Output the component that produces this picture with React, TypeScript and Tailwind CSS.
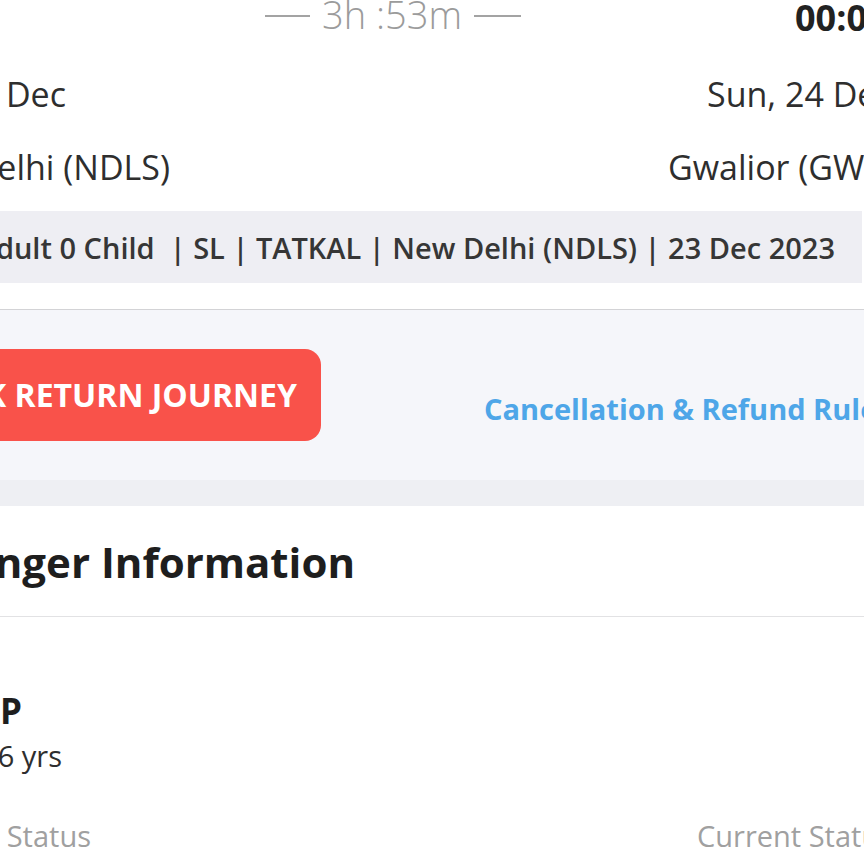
export default function App() {
  return (
    <div className="w-[864px] h-[864px] overflow-hidden bg-white text-[#2e2e2e] font-['Open_Sans',sans-serif]">
      {/* duration + arrival time */}
      <div className="flex h-[44px] items-start">
        <div className="flex shrink-0 items-center ml-[265px] -mt-[5px] gap-[12px]">
          <span className="block w-[45px] h-[2px] mt-[3px] bg-[#a3a3a3]" />
          <span className="text-[38px] leading-[38px] font-light text-[#9b9b9b] whitespace-nowrap">3h :53m</span>
          <span className="block w-[47px] h-[2px] mt-[3px] bg-[#a3a3a3]" />
        </div>
        <div className="ml-auto w-[69px] shrink-0 whitespace-nowrap text-[36px] leading-[36px] font-bold text-[#222]">
          00:00
        </div>
      </div>

      {/* dates */}
      <div className="flex mt-[33px] h-[34px]">
        <div className="w-[66px] shrink-0 flex justify-end whitespace-nowrap text-[34px] leading-[34px]">
          Sat, 23 Dec
        </div>
        <div className="ml-[641px] shrink-0 whitespace-nowrap text-[34px] leading-[34px]">
          Sun, 24 Dec
        </div>
      </div>

      {/* stations */}
      <div className="flex mt-[39px] h-[34px]">
        <div className="w-[170px] shrink-0 flex justify-end whitespace-nowrap text-[34px] leading-[34px]">
          New Delhi (NDLS)
        </div>
        <div className="ml-[498px] shrink-0 whitespace-nowrap text-[34px] leading-[34px]">
          Gwalior (GWL)
        </div>
      </div>

      {/* booking summary bar */}
      <div className="mt-[27px] w-[862px] h-[72px] bg-[#eeeef3] flex items-center justify-end pr-[27px]">
        <span className="shrink-0 whitespace-pre text-[29px] leading-[29px] font-semibold text-[#363636]">
          1 Adult 0 Child  | SL | TATKAL | New Delhi (NDLS) | 23 Dec 2023
        </span>
      </div>

      <div className="mt-[26px] h-px bg-[#d3d3d6]" />

      {/* return journey + rules */}
      <div className="h-[170px] bg-[#f5f6fa] flex items-center">
        <div className="w-[321px] shrink-0 flex justify-end">
          <button className="shrink-0 h-[92px] px-[24px] rounded-[16px] bg-[#f9524a] text-white whitespace-nowrap text-[32px] leading-[32px] font-bold">
            BOOK RETURN JOURNEY
          </button>
        </div>
        <div className="ml-[163px] mt-[26px] shrink-0 whitespace-nowrap text-[29px] leading-[29px] font-bold text-[#4ea6e8]">
          Cancellation &amp; Refund Rules
        </div>
      </div>
      <div className="h-[26px] bg-[#eeeff3]" />

      {/* passenger information */}
      <div className="pt-[35px] h-[111px] border-b border-[#e2e2e4]">
        <div className="w-[355px] flex justify-end whitespace-nowrap text-[42px] leading-[42px] font-bold text-[#1e1e1e]">
          Passenger Information
        </div>
      </div>

      <div className="mt-[76px] w-[22px] flex justify-end whitespace-nowrap text-[35px] leading-[35px] font-bold text-[#1e1e1e]">
        P
      </div>
      <div className="mt-[13px] w-[62px] flex justify-end whitespace-nowrap text-[29px] leading-[29px] text-[#2e2e2e]">
        6 yrs
      </div>

      <div className="flex mt-[51px]">
        <div className="w-[91px] shrink-0 flex justify-end whitespace-nowrap text-[29px] leading-[29px] text-[#a0a0a0]">
          Booking Status
        </div>
        <div className="ml-[606px] shrink-0 whitespace-nowrap text-[29px] leading-[29px] text-[#a0a0a0]">
          Current Status
        </div>
      </div>
    </div>
  );
}
